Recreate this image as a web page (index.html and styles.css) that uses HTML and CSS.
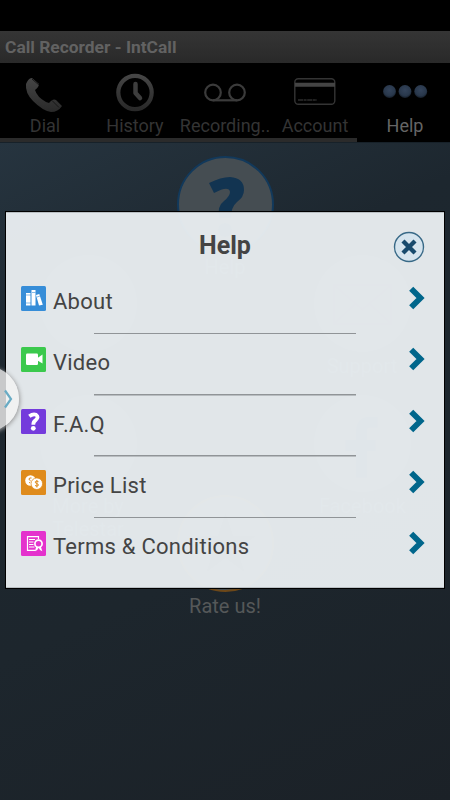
FILE: index.html
```html
<!DOCTYPE html>
<html lang="en">
<head>
<meta charset="utf-8">
<title>Call Recorder - IntCall</title>
<link rel="stylesheet" href="styles.css">
</head>
<body>
<div class="screen">
  <div class="status"></div>
  <header class="titlebar">Call Recorder - IntCall</header>
  <nav class="tabs">
    <div class="tab">
      <svg class="tab-icon" viewBox="0 0 48 42"><defs><linearGradient id="g" x1="0" y1="0" x2="0" y2="1"><stop offset="0" stop-color="#454545"/><stop offset="1" stop-color="#292929"/></linearGradient></defs><path d="M6 9Q8 5 11 5L18 11Q18 14 14 17Q16 24 25 29L28 30Q32 25 35 27L41 33Q37 39 30 39Q22 38 12 28Q4 20 5 11Z" fill="url(#g)"/><path d="M11 6L18 12M31 27.500L38 34.500" stroke="#171717" stroke-width="1" fill="none"/></svg>
      <span>Dial</span>
    </div>
    <div class="tab">
      <svg class="tab-icon" viewBox="0 0 48 42"><circle cx="24" cy="19.500" r="16.700" fill="none" stroke="url(#g)" stroke-width="4.200"/><path d="M24.500 11V20L29 25" fill="none" stroke="#3d3d3d" stroke-width="4.500" stroke-linecap="round" stroke-linejoin="round"/></svg>
      <span>History</span>
    </div>
    <div class="tab">
      <svg class="tab-icon" viewBox="0 0 48 42"><g fill="none" stroke="#3b3b3b" stroke-width="2.200"><circle cx="12" cy="19.500" r="7.800"/><circle cx="36" cy="19.500" r="7.800"/><path d="M12 27.300H36"/></g></svg>
      <span>Recording..</span>
    </div>
    <div class="tab">
      <svg class="tab-icon" viewBox="0 0 48 42"><rect x="3.800" y="5.800" width="40" height="25.500" rx="3.500" fill="none" stroke="#343434" stroke-width="1.400"/><path d="M4 11.800H44" stroke="#444" stroke-width="4"/><path d="M7 27H26" stroke="#2c2c2c" stroke-width="1.300" stroke-dasharray="5 .6 3 .6"/></svg>
      <span>Account</span>
    </div>
    <div class="tab active">
      <svg class="tab-icon" viewBox="0 0 48 42"><defs><radialGradient id="d" cx=".5" cy=".4" r=".6"><stop offset="0" stop-color="#34445b"/><stop offset=".7" stop-color="#29384c"/><stop offset="1" stop-color="#151d28"/></radialGradient></defs><circle cx="8.500" cy="18.500" r="6.500" fill="url(#d)"/><circle cx="24" cy="18.500" r="6.500" fill="url(#d)"/><circle cx="39.700" cy="18.500" r="6.500" fill="url(#d)"/></svg>
      <span>Help</span>
    </div>
  </nav>
  <main class="content">
    <div class="column side">
      <div class="item"><div class="disc"></div><span>&nbsp;</span></div>
      <div class="item"><div class="disc"></div><span>More by Telestar</span></div>
    </div>
    <div class="column middle">
      <div class="item"><div class="disc blue"><svg viewBox="0 0 93 93"><path d="M30 25Q42 19 51 19Q65 20 65 32Q65 39 58 44Q52 49 52 60H40Q38 48 45 43Q51 38 51 34Q50 27 35 35Z" fill="#123451"/><circle cx="46" cy="72" r="7" fill="#123451"/></svg></div><span>Help</span></div>
      <div class="item rate"><div class="disc orange"><svg viewBox="0 0 96 96"><path d="M48 16L56 40H80L60 54L68 78L48 63L28 78L36 54L16 40H40Z" fill="#343029"/></svg></div><span>Rate us!</span></div>
    </div>
    <div class="column side">
      <div class="item"><div class="disc mail"><svg viewBox="0 0 96 96"><path d="M20 30H76V68H20ZM20 30L48 54L76 30M20 68L41 48M76 68L55 48" fill="none" stroke="#3e3139" stroke-width="2"/></svg></div><span>Support</span></div>
      <div class="item"><div class="disc"><svg viewBox="0 0 96 96"><path d="M63 27H55Q47 27 47 36V82M31 50H61" fill="none" stroke="#182b40" stroke-width="11"/></svg></div><span>Facebook</span></div>
    </div>
  </main>
</div>

<section class="dialog">
  <header class="dialog-head">
    <h1>Help</h1>
    <svg class="close" viewBox="0 0 32 32"><circle cx="16" cy="16" r="14.500" fill="#d5e4ee" stroke="#386987" stroke-width="1.400"/><path d="M11 11L21 21M21 11L11 21" stroke="#174a6d" stroke-width="4.800" stroke-linecap="square" fill="none" transform="translate(1.600 1.600) scale(.9)"/></svg>
  </header>
  <div class="row">
    <svg class="icon" viewBox="0 0 25 25"><rect width="25" height="25" rx="1.500" fill="#368dd8"/><path d="M5 7H9.500V19.500H5ZM10.500 4H14.500V19.500H10.500ZM15 9L18.300 8L21.800 18.700L18 19.500Z" fill="#fff"/><path d="M5 9H10M5 17H10M11 6.500H14.500M16 11L19 10" stroke="#368dd8" stroke-width=".6"/></svg>
    <span>About</span><svg class="chevron" viewBox="0 0 18 24"><path d="M3.200 2.700L12.500 12L3.200 21.300" /></svg>
  </div>
  <div class="row">
    <svg class="icon" viewBox="0 0 25 25"><rect width="25" height="25" rx="1.500" fill="#3bc94d"/><rect x="5" y="6.500" width="12" height="11.500" rx="1.200" fill="#fff"/><path d="M16.500 11L21.500 7.500V16.500L16.500 13.500Z" fill="#fff"/></svg>
    <span>Video</span><svg class="chevron" viewBox="0 0 18 24"><path d="M3.200 2.700L12.500 12L3.200 21.300"/></svg>
  </div>
  <div class="row">
    <svg class="icon" viewBox="0 0 25 25"><rect width="25" height="25" rx="1.500" fill="#743bdc"/><path d="M8.300 7.200Q12 4.500 15 5.700Q18.300 8 14.700 11.200Q12.300 12.700 12.300 15.800" fill="none" stroke="#fff" stroke-width="3.800"/><circle cx="12.300" cy="19.300" r="2.400" fill="#fff"/></svg>
    <span>F.A.Q</span><svg class="chevron" viewBox="0 0 18 24"><path d="M3.200 2.700L12.500 12L3.200 21.300"/></svg>
  </div>
  <div class="row">
    <svg class="icon" viewBox="0 0 25 25"><rect width="25" height="25" rx="1.500" fill="#df8b1c"/><circle cx="9.500" cy="10.500" r="5.300" fill="#fff"/><circle cx="15.800" cy="13.700" r="5.800" fill="#fff" stroke="#df8b1c" stroke-width=".8"/><path d="M17.500 11.700Q15.500 10.500 14.300 11.700Q13.800 13 15.800 13.600Q18 14.300 17.300 15.500Q16 16.800 14 15.500M15.900 10V17.500M10.500 8Q8 7.500 8 9Q8 10.300 9.500 10.500M8 13L9.300 12" fill="none" stroke="#df8b1c" stroke-width="1"/></svg>
    <span>Price List</span><svg class="chevron" viewBox="0 0 18 24"><path d="M3.200 2.700L12.500 12L3.200 21.300"/></svg>
  </div>
  <div class="row">
    <svg class="icon" viewBox="0 0 25 25"><rect width="25" height="25" rx="1.500" fill="#e432cd"/><path d="M14.500 19.300H6.500V5.700H17.500V8" fill="none" stroke="#fff" stroke-width="1.200"/><path d="M8 8.500H14M8 11H12.500M8 13.500H12.500M8 16H13.500" stroke="#fff" stroke-width="1.100"/><circle cx="17.500" cy="12.700" r="3.600" fill="#e432cd" stroke="#fff" stroke-width="1.700"/><path d="M15 16L14 20.300L16.300 19L17.500 16.500L19 19L21.300 20.300L20 16Z" fill="#fff"/></svg>
    <span>Terms &amp; Conditions</span><svg class="chevron" viewBox="0 0 18 24"><path d="M3.200 2.700L12.500 12L3.200 21.300"/></svg>
  </div>
</section>
<div class="drawer"><svg viewBox="0 0 20 66"><path d="M6 24.500L12 33L6 41.500" fill="none" stroke="#69abc4" stroke-width="2.200"/></svg></div>
</body>
</html>
```
FILE: styles.css
```css
* { box-sizing: border-box; }
body { margin: 0; width: 450px; height: 800px; overflow: hidden; position: relative; background: #000; font-family: Roboto, "Liberation Sans", sans-serif; }
.screen { height: 800px; display: flex; flex-direction: column; }
.status { height: 31px; }
.titlebar { height: 32px; padding-left: 5px; background: linear-gradient(#353535, #292929); color: #626262; font-size: 17.4px; font-weight: 700; line-height: 33px; }
.tabs { height: 79px; display: grid; grid-template-columns: repeat(5, 90px); }
.tab { display: flex; flex-direction: column; align-items: center; padding-top: 10px; border-bottom: 4px solid #2b2b2b; height: 79px; color: #343434; font-size: 18px; line-height: 22px; background: #000; }
.tab:nth-child(4) { border-image: linear-gradient(90deg, #2b2b2b 87px, #000 87px) 4; }
.tab:nth-child(4) { border-bottom-color: transparent; border-image: none; background: linear-gradient(#2b2b2b, #2b2b2b) 0 100% / 87px 4px no-repeat border-box, #000; }
.tab.active { color: #656565; border-color: #000; }
.tab-icon { width: 48px; height: 42px; flex: none; }
.tab-icon + span { white-space: nowrap; }
.content { flex: 1; padding: 0 19.5px; display: grid; grid-template-columns: repeat(3, 137px); background: linear-gradient(155deg, #26343f 0%, #1d272f 28%, #1d262d 60%, #1b2127 100%); border-top: 1px solid #172129; }
.column { display: flex; flex-direction: column; }
.side { padding-top: 112px; }
.middle { padding-top: 13px; }
.item { height: 140px; display: flex; flex-direction: column; align-items: center; color: #555859; font-size: 20px; line-height: 23px; text-align: center; }
.item span { width: 86px; margin-top: 3px; }
.disc { width: 97px; height: 97px; flex: none; border-radius: 50%; background: #454d52; }
.blue { border: 2px solid #12395b; }
.orange { border: 2px solid #6d4819; }
.mail { background: #49444b; }
.rate { margin-top: 199px; }
.dialog { position: absolute; left: 5px; top: 211px; width: 440px; height: 378px; border: 1px solid #000; background: rgba(231, 236, 239, .97); box-shadow: inset 0 1px #b9bfc3, inset 0 -1px #b9bfc3; color: #444; }
.dialog-head { height: 61px; display: grid; grid-template-columns: 1fr 80px 1fr; align-items: center; padding: 7px 19px 0 19px; }
.dialog-head h1 { grid-column: 2; margin: 0; text-align: center; font-size: 25px; font-weight: 700; line-height: 30px; }
.close { width: 32px; height: 32px; justify-self: end; margin-top: 2px; }
.row { height: 61.3px; padding: 13px 18px 0 15px; display: flex; align-items: flex-start; background: linear-gradient(#909497, #909497) 88px 100% / 262px 1.5px no-repeat; font-size: 22px; line-height: 32px; }
.row:last-child { background: none; }
.row span { margin-left: 7px; flex: 1; letter-spacing: .25px; }
.icon { width: 25px; height: 25px; flex: none; }
.chevron { width: 18px; height: 24px; }
.chevron path { fill: none; stroke: #00668b; stroke-width: 5.8; }
.drawer { position: absolute; left: -47px; top: 366px; width: 66px; height: 66px; border-radius: 50%; background: linear-gradient(90deg, #c8c9ca 53px, #f0f1f1 53px); box-shadow: 1px 1px 4px #999; display: flex; justify-content: flex-end; }
.drawer svg { width: 20px; height: 66px; }
```
